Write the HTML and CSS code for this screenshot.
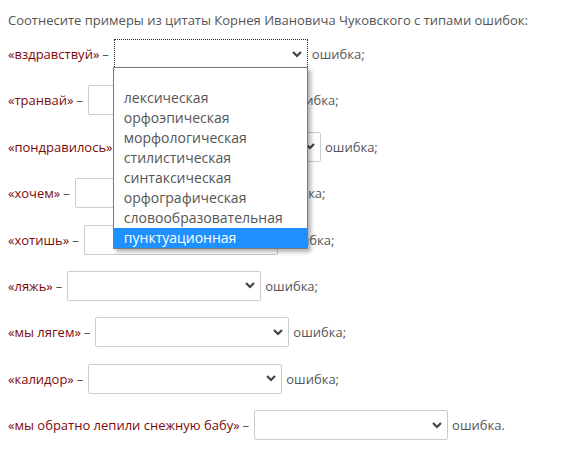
FILE: index.html
```
<!DOCTYPE html>
<html lang="ru">
<head>
    <meta charset="UTF-8">
    <title>Ошибки</title>
    <link rel="stylesheet" href="styles.css">
</head>
<body>
    <div class="task">
        <p class="intro">Соотнесите примеры из цитаты Корнея Ивановича Чуковского с типами ошибок:</p>

        <div class="row">
            <span class="word">«вздравствуй»</span><span class="dash">–</span>
            <div class="pick">
                <div class="sel focus"><svg class="arrow" width="10" height="7" viewBox="0 0 10 7"><polyline points="1,1 5,5 9,1"/></svg></div>
                <ul class="list">
                    <li class="empty"></li>
                    <li>лексическая</li>
                    <li>орфоэпическая</li>
                    <li>морфологическая</li>
                    <li>стилистическая</li>
                    <li>синтаксическая</li>
                    <li>орфографическая</li>
                    <li>словообразовательная</li>
                    <li class="hover">пунктуационная</li>
                </ul>
            </div>
            <span>ошибка;</span>
        </div>
        <div class="row">
            <span class="word">«транвай»</span><span class="dash">–</span>
            <div class="sel"><svg class="arrow" width="10" height="7" viewBox="0 0 10 7"><polyline points="1,1 5,5 9,1"/></svg></div>
            <span>ошибка;</span>
        </div>
        <div class="row">
            <span class="word">«пондравилось»</span><span class="dash">–</span>
            <div class="sel"><svg class="arrow" width="10" height="7" viewBox="0 0 10 7"><polyline points="1,1 5,5 9,1"/></svg></div>
            <span>ошибка;</span>
        </div>
        <div class="row">
            <span class="word">«хочем»</span><span class="dash">–</span>
            <div class="sel"><svg class="arrow" width="10" height="7" viewBox="0 0 10 7"><polyline points="1,1 5,5 9,1"/></svg></div>
            <span>ошибка;</span>
        </div>
        <div class="row">
            <span class="word">«хотишь»</span><span class="dash">–</span>
            <div class="sel"><svg class="arrow" width="10" height="7" viewBox="0 0 10 7"><polyline points="1,1 5,5 9,1"/></svg></div>
            <span>ошибка;</span>
        </div>
        <div class="row">
            <span class="word">«ляжь»</span><span class="dash">–</span>
            <div class="sel"><svg class="arrow" width="10" height="7" viewBox="0 0 10 7"><polyline points="1,1 5,5 9,1"/></svg></div>
            <span>ошибка;</span>
        </div>
        <div class="row">
            <span class="word">«мы лягем»</span><span class="dash">–</span>
            <div class="sel"><svg class="arrow" width="10" height="7" viewBox="0 0 10 7"><polyline points="1,1 5,5 9,1"/></svg></div>
            <span>ошибка;</span>
        </div>
        <div class="row">
            <span class="word">«калидор»</span><span class="dash">–</span>
            <div class="sel"><svg class="arrow" width="10" height="7" viewBox="0 0 10 7"><polyline points="1,1 5,5 9,1"/></svg></div>
            <span>ошибка;</span>
        </div>
        <div class="row">
            <span class="word">«мы обратно лепили снежную бабу»</span><span class="dash">–</span>
            <div class="sel"><svg class="arrow" width="10" height="7" viewBox="0 0 10 7"><polyline points="1,1 5,5 9,1"/></svg></div>
            <span>ошибка.</span>
        </div>
    </div>
</body>
</html>
```

FILE: styles.css
```
body {
    margin: 0;
    background-color: #fff;
    font-family: "Open Sans", "Noto Sans", sans-serif;
    font-size: 13px;
    color: #555;
}
.task {
    padding: 11px 8px;
    display: flex;
    flex-direction: column;
    gap: 16.4px;
}
.intro {
    margin: 0 0 -6.4px 0;
    line-height: 18px;
}
.row {
    display: flex;
    align-items: center;
    height: 30px;
}
.word {
    color: #7d0a0a;
}
.dash {
    margin: 0 5px 0 3px;
}
.pick {
    position: relative;
    z-index: 2;
}
.sel {
    box-sizing: border-box;
    width: 194px;
    height: 30px;
    margin-right: 4px;
    border: 1px solid #ccc;
    border-radius: 2px;
    background-color: #fff;
    display: flex;
    align-items: center;
    justify-content: flex-end;
    padding-right: 5px;
}
.sel.focus {
    border: 1px dotted #222;
    border-radius: 0;
}
.arrow polyline {
    fill: none;
    stroke: #444;
    stroke-width: 2.2;
}
.list {
    position: absolute;
    top: 28px;
    left: -1px;
    box-sizing: border-box;
    width: 195px;
    margin: 0;
    padding: 0;
    list-style: none;
    background-color: #fff;
    border: 1px solid #7a7a7a;
    box-shadow: 3px 3px 4px rgba(0,0,0,0.3);
    font-size: 14px;
    color: #555;
}
.list li {
    height: 20px;
    line-height: 20px;
    padding-left: 10px;
}
.list .hover {
    background-color: #1e90ff;
    color: #fff;
}
```
